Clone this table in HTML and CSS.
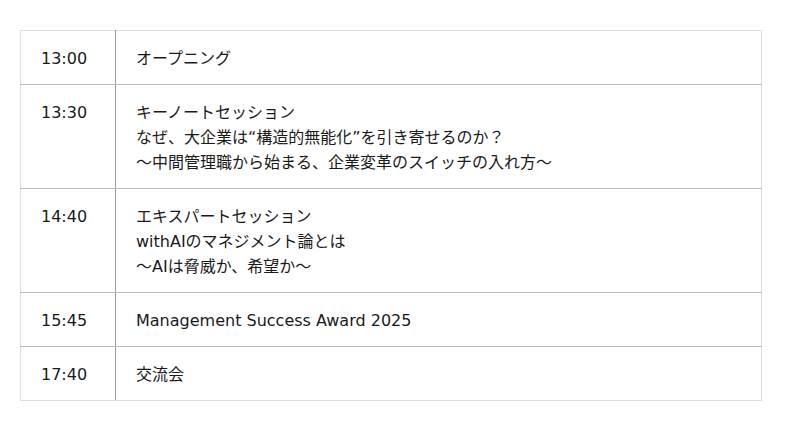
FILE: index.html
```html
<!DOCTYPE html>
<html lang="ja">
<head>
<meta charset="utf-8">
<link rel="stylesheet" href="styles.css">
</head>
<body>
<div class="page">
<table class="schedule">
<tr><td class="time">13:00</td><td class="desc">オープニング</td></tr>
<tr><td class="time">13:30</td><td class="desc">キーノートセッション<br>なぜ、大企業は“構造的無能化”を引き寄せるのか？<br>～中間管理職から始まる、企業変革のスイッチの入れ方～</td></tr>
<tr><td class="time">14:40</td><td class="desc">エキスパートセッション<br>withAIのマネジメント論とは<br>～AIは脅威か、希望か～</td></tr>
<tr><td class="time">15:45</td><td class="desc">Management Success Award 2025</td></tr>
<tr><td class="time">17:40</td><td class="desc">交流会</td></tr>
</table>
</div>
</body>
</html>
```
FILE: styles.css
```css
html, body { margin: 0; padding: 0; background: #fff; }
.page { padding: 30px 38px 0 20px; }
.schedule {
  width: 742px;
  border-collapse: collapse;
  font-family: "DejaVu Sans", "Noto Sans CJK JP", sans-serif;
  font-size: 16px;
  line-height: 25px;
  color: #1a1a1a;
  border: 1px solid #ddd;
}
.schedule td {
  border-top: 1px solid #bbb;
  border-bottom: 1px solid #bbb;
  padding: 15px 20px 13px;
  vertical-align: top;
}
.schedule tr:first-child td { border-top: 1px solid #ddd; }
.schedule tr:last-child td { border-bottom: 1px solid #ddd; }
.time { width: 54px; border-right: 1px solid #999; }
.desc { border-right: 1px solid #ddd; }
```
